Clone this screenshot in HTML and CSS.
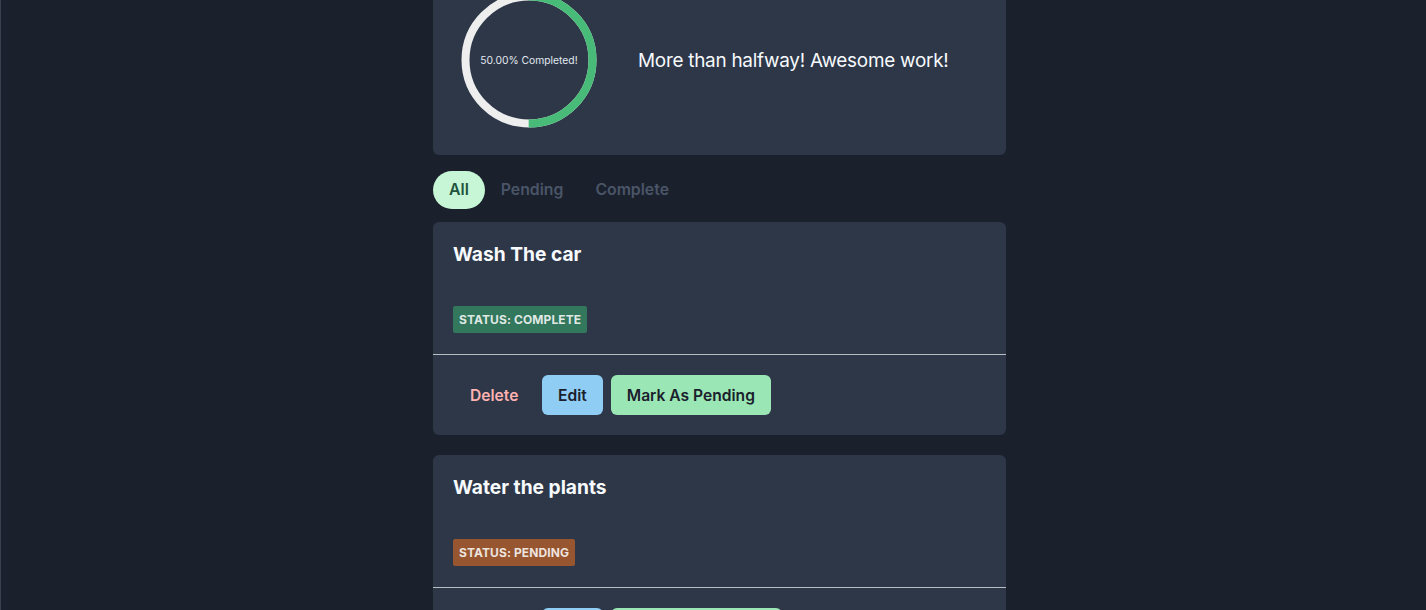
FILE: index.html
```html
<!DOCTYPE html>
<html lang="en">
<head>
<meta charset="utf-8">
<title>Todos</title>
<link rel="stylesheet" href="styles.css">
</head>
<body>
<div class="edge"></div>
<main class="wrap">
  <section class="card progress-card">
    <div class="ring">
      <svg width="136" height="136" viewBox="0 0 136 136">
        <circle cx="68" cy="68" r="63.5" fill="none" stroke="#EEEEEE" stroke-width="8"/>
        <circle cx="68" cy="68" r="63.5" fill="none" stroke="#48BB78" stroke-width="8"
          stroke-dasharray="199.49 400" transform="rotate(-90 68 68)"/>
      </svg>
      <span class="ring-label">50.00% Completed!</span>
    </div>
    <p class="message">More than halfway! Awesome work!</p>
  </section>

  <nav class="tabs">
    <button class="tab active">All</button>
    <button class="tab">Pending</button>
    <button class="tab">Complete</button>
  </nav>

  <section class="card todo">
    <div class="todo-body">
      <h2 class="todo-title">Wash The car</h2>
      <span class="badge badge-complete">Status: Complete</span>
    </div>
    <hr class="divider">
    <div class="todo-footer">
      <button class="btn btn-ghost">Delete</button>
      <button class="btn btn-blue">Edit</button>
      <button class="btn btn-green">Mark As Pending</button>
    </div>
  </section>

  <section class="card todo">
    <div class="todo-body">
      <h2 class="todo-title">Water the plants</h2>
      <span class="badge badge-pending">Status: Pending</span>
    </div>
    <hr class="divider">
    <div class="todo-footer">
      <button class="btn btn-ghost">Delete</button>
      <button class="btn btn-blue">Edit</button>
      <button class="btn btn-green">Mark As Complete</button>
    </div>
  </section>
</main>
</body>
</html>
```
FILE: styles.css
```css
* { box-sizing: border-box; }
html, body {
  margin: 0;
  padding: 0;
  background: #1A202C;
  height: 100%;
  overflow: hidden;
}
body {
  font-family: Inter, "Noto Sans", "Liberation Sans", sans-serif;
  color: #E2E8F0;
  position: relative;
}
.edge {
  position: absolute;
  left: 0;
  top: 0;
  bottom: 0;
  width: 1px;
  background: #3A4252;
}
.wrap {
  width: 573px;
  margin: -32px 0 0 433px;
  display: flex;
  flex-direction: column;
}
.card {
  background: #2D3748;
  border-radius: 6px;
}
.progress-card {
  display: flex;
  align-items: center;
  padding: 24px 28px 27px 28px;
  gap: 41px;
}
.ring {
  position: relative;
  width: 136px;
  height: 136px;
  flex: none;
}
.ring svg { display: block; }
.ring-label {
  position: absolute;
  inset: 0;
  display: flex;
  align-items: center;
  justify-content: center;
  font-size: 10.3px;
  color: #E2E8F0;
  white-space: nowrap;
}
.message {
  margin: 0;
  font-size: 18.9px;
  color: #F7FAFC;
  letter-spacing: -0.25px;
}
.tabs {
  display: flex;
  margin-top: 16px;
  margin-bottom: 13px;
}
.tab {
  font-family: inherit;
  font-size: 15.8px;
  font-weight: 600;
  line-height: 24px;
  padding: 7px 16px;
  border: none;
  background: transparent;
  color: #4A5568;
  border-radius: 999px;
}
.tab.active {
  background: #C6F6D5;
  color: #22543D;
}
.todo { margin-bottom: 20px; }
.todo-body {
  padding: 20px 20px 21px 20px;
}
.todo-title {
  margin: 0 0 40px 0;
  font-size: 19.2px;
  font-weight: 700;
  line-height: 24px;
  color: #F7FAFC;
}
.badge {
  display: inline-block;
  font-size: 12px;
  font-weight: 700;
  text-transform: uppercase;
  letter-spacing: 0.1px;
  line-height: 15px;
  padding: 6px 6px;
  border-radius: 2px;
  color: rgba(255,255,255,0.85);
}
.badge-complete { background: #33775C; }
.badge-pending { background: #975630; }
.divider {
  margin: 0;
  border: none;
  border-top: 1px solid #B8BCC3;
}
.todo-footer {
  display: flex;
  gap: 8px;
  padding: 20px 20px 20px 21px;
}
.btn {
  font-family: inherit;
  font-size: 15.6px;
  font-weight: 600;
  height: 40px;
  padding: 0 16px;
  border: none;
  border-radius: 6px;
  color: #1A202C;
}
.btn-ghost {
  background: transparent;
  color: #FEB2B2;
  width: 80px;
}
.btn-blue { background: #90CDF4; }
.btn-green { background: #9AE6B4; }
```
